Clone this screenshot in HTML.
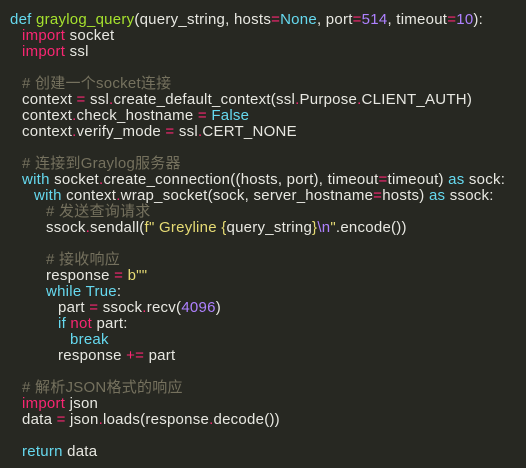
<!DOCTYPE html>
<html><head><meta charset="utf-8"><style>
html,body{margin:0;padding:0;background:#272822;width:526px;height:468px;overflow:hidden}
#c{position:absolute;left:10px;top:12px;font-family:"Liberation Sans","Noto Sans CJK SC",sans-serif;font-size:15px;line-height:16px;color:#e8e8e2;letter-spacing:0.25px}
#c div{height:16px;white-space:pre}
.i1{padding-left:12px}.i2{padding-left:24px}.i3{padding-left:36px}.i4{padding-left:48px}.i5{padding-left:60px}
.k{color:#f92672}.b{color:#66d9ef}.g{color:#a6e22e}.y{color:#e6db74}.p{color:#ae81ff}.c{color:#75715e}
</style></head><body><div id="c">
<div><span class="b">def</span> <span class="g">graylog_query</span>(query_string, hosts<span class="k">=</span><span class="b">None</span>, port<span class="k">=</span><span class="p">514</span>, timeout<span class="k">=</span><span class="p">10</span>):</div>
<div class="i1"><span class="k">import</span> socket</div>
<div class="i1"><span class="k">import</span> ssl</div>
<div></div>
<div class="i1"><span class="c"># 创建一个socket连接</span></div>
<div class="i1">context <span class="k">=</span> ssl<span class="k">.</span>create_default_context(ssl<span class="k">.</span>Purpose<span class="k">.</span>CLIENT_AUTH)</div>
<div class="i1">context<span class="k">.</span>check_hostname <span class="k">=</span> <span class="b">False</span></div>
<div class="i1">context<span class="k">.</span>verify_mode <span class="k">=</span> ssl<span class="k">.</span>CERT_NONE</div>
<div></div>
<div class="i1"><span class="c"># 连接到Graylog服务器</span></div>
<div class="i1"><span class="b">with</span> socket<span class="k">.</span>create_connection((hosts, port), timeout<span class="k">=</span>timeout) <span class="b">as</span> sock:</div>
<div class="i2"><span class="b">with</span> context<span class="k">.</span>wrap_socket(sock, server_hostname<span class="k">=</span>hosts) <span class="b">as</span> ssock:</div>
<div class="i3"><span class="c"># 发送查询请求</span></div>
<div class="i3">ssock<span class="k">.</span>sendall(<span class="y">f" Greyline {</span>query_string<span class="y">}</span><span class="p">\n</span><span class="y">"</span>.encode())</div>
<div></div>
<div class="i3"><span class="c"># 接收响应</span></div>
<div class="i3">response <span class="k">=</span> <span class="y">b""</span></div>
<div class="i3"><span class="b">while</span> <span class="b">True</span>:</div>
<div class="i4">part <span class="k">=</span> ssock<span class="k">.</span>recv(<span class="p">4096</span>)</div>
<div class="i4"><span class="b">if</span> <span class="k">not</span> part:</div>
<div class="i5"><span class="b">break</span></div>
<div class="i4">response <span class="k">+=</span> part</div>
<div></div>
<div class="i1"><span class="c"># 解析JSON格式的响应</span></div>
<div class="i1"><span class="k">import</span> json</div>
<div class="i1">data <span class="k">=</span> json<span class="k">.</span>loads(response<span class="k">.</span>decode())</div>
<div></div>
<div class="i1"><span class="b">return</span> data</div>
</div></body></html>
